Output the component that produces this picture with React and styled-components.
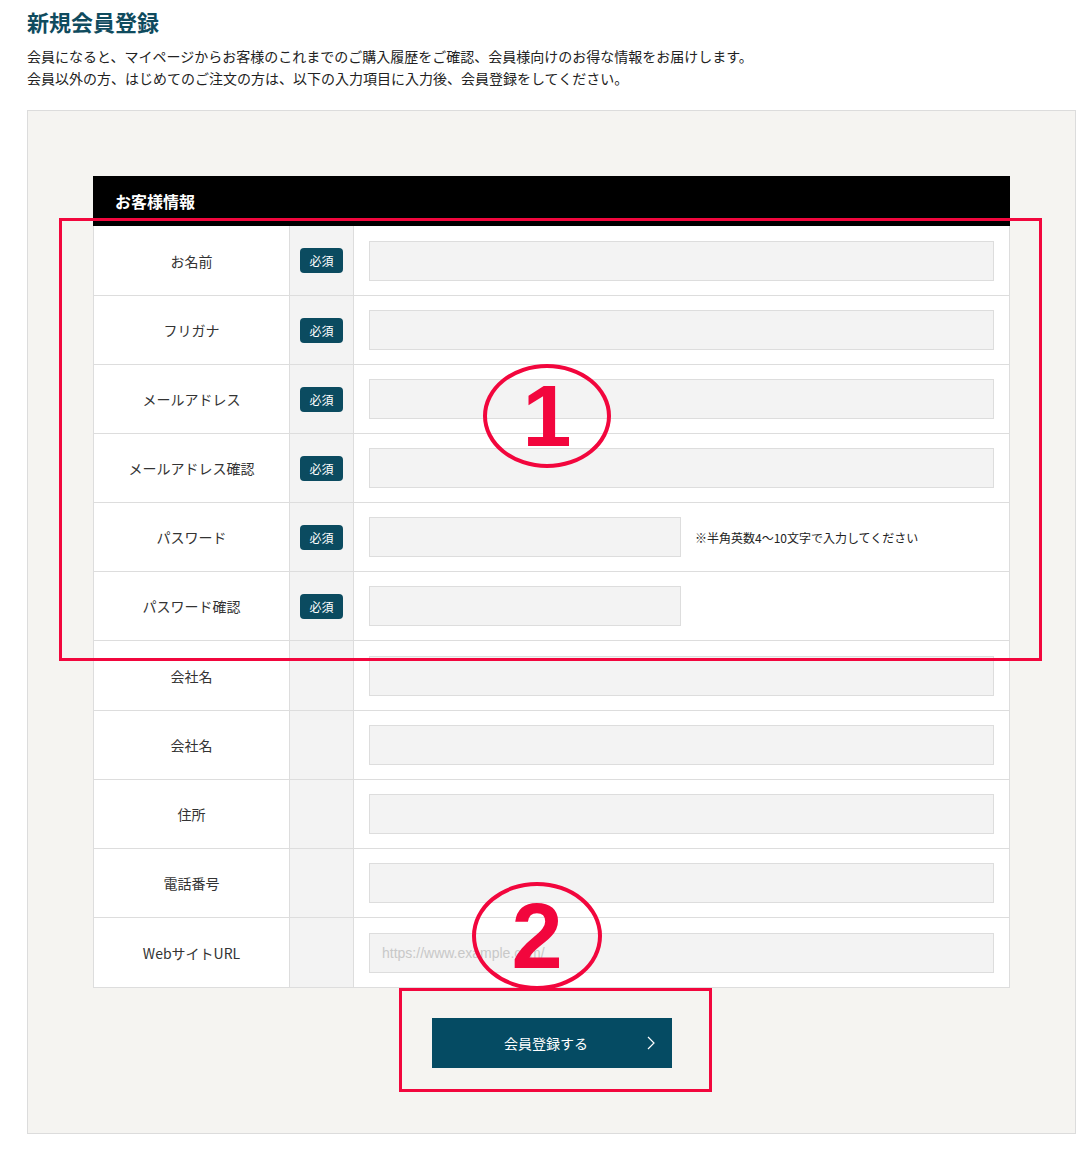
import styled, { createGlobalStyle } from "styled-components";

const GlobalStyle = createGlobalStyle`
  body {
    margin: 0;
    background: #fff;
    font-family: "Noto Sans CJK JP", "Noto Sans", sans-serif;
    color: #222;
  }
`;

const Page = styled.div`
  position: relative;
  width: 1090px;
  height: 1158px;
  padding: 0 14px 0 27px;
  box-sizing: border-box;
`;

const Title = styled.h1`
  margin: 0;
  font-size: 22px;
  line-height: 42px;
  font-weight: 700;
  color: #0f4b5e;
`;

const Intro = styled.p`
  margin: 3px 0 0;
  font-size: 14px;
  line-height: 22px;
  color: #222;
`;

const Panel = styled.section`
  margin-top: 21px;
  background: #f5f4f1;
  border: 1px solid #dcdcdc;
  padding: 65px 65px 65px;
  display: flex;
  flex-direction: column;
  align-items: center;
`;

const Table = styled.div`
  width: 917px;
  background: #fff;
  border: 1px solid #ddd;
  border-top: none;
  box-sizing: border-box;
`;

const TableHead = styled.div`
  height: 50px;
  background: #000;
  color: #fff;
  font-size: 16px;
  font-weight: 700;
  display: flex;
  align-items: center;
  padding: 0 0 0 22px;
  margin: 0 -1px;
`;

const Row = styled.div`
  display: grid;
  grid-template-columns: 195px 65px 1fr;
  height: ${(p) => (p.$tall ? "70px" : "69px")};
  border-top: ${(p) => (p.$first ? "none" : "1px solid #ddd")};
  box-sizing: border-box;
`;

const Label = styled.div`
  display: flex;
  align-items: center;
  justify-content: center;
  font-size: 14px;
  color: #333;
`;

const BadgeCell = styled.div`
  background: #f3f3f3;
  border-left: 1px solid #ddd;
  border-right: 1px solid #ddd;
  display: flex;
  align-items: center;
  justify-content: center;
`;

const Badge = styled.span`
  width: 43px;
  height: 25px;
  border-radius: 4px;
  background: #0b4b60;
  color: #fff;
  font-size: 12px;
  display: flex;
  align-items: center;
  justify-content: center;
`;

const InputCell = styled.div`
  display: flex;
  align-items: center;
  gap: 14px;
  padding: 0 15px;
`;

const Input = styled.input`
  width: ${(p) => (p.$short ? "312px" : "100%")};
  height: 40px;
  box-sizing: border-box;
  background: #f3f3f3;
  border: 1px solid #ddd;
  padding: 0 12px;
  font-family: "Liberation Sans", Arial, sans-serif;
  font-size: 14px;
  outline: none;

  &::placeholder {
    color: #c8c8c8;
  }
`;

const Note = styled.span`
  font-size: 12px;
  color: #222;
`;

const Submit = styled.button`
  margin-top: 30px;
  width: 240px;
  height: 50px;
  padding: 0 11px 0 0;
  background: #054b63;
  border: none;
  color: #fff;
  font-family: "Noto Sans CJK JP", sans-serif;
  font-size: 14px;
  display: flex;
  align-items: center;
  justify-content: center;
  position: relative;
  cursor: pointer;

  svg {
    position: absolute;
    right: 17px;
    top: 50%;
    transform: translateY(-50%);
  }
`;

const Frame = styled.div`
  position: absolute;
  border: 3px solid #f2063d;
  box-sizing: border-box;
  pointer-events: none;
`;

const Circle = styled.div`
  position: absolute;
  border: 4px solid #f2063d;
  border-radius: 50%;
  box-sizing: border-box;
  display: flex;
  align-items: center;
  justify-content: center;
  color: #f2063d;
  font-family: "Liberation Sans", Arial, sans-serif;
  font-weight: 700;
  font-size: ${(p) => p.$size}px;
  line-height: 1;
  pointer-events: none;
`;

const fields = [
  { label: "お名前", req: true },
  { label: "フリガナ", req: true },
  { label: "メールアドレス", req: true },
  { label: "メールアドレス確認", req: true },
  { label: "パスワード", req: true, short: true, note: "※半角英数4〜10文字で入力してください" },
  { label: "パスワード確認", req: true, short: true },
  { label: "会社名", tall: true },
  { label: "会社名" },
  { label: "住所" },
  { label: "電話番号" },
  { label: "WebサイトURL", placeholder: "https://www.example.com/", tall: true },
];

export default function App() {
  return (
    <>
      <GlobalStyle />
      <Page>
        <Title>新規会員登録</Title>
        <Intro>
          会員になると、マイページからお客様のこれまでのご購入履歴をご確認、会員様向けのお得な情報をお届けします。
          <br />
          会員以外の方、はじめてのご注文の方は、以下の入力項目に入力後、会員登録をしてください。
        </Intro>
        <Panel>
          <Table>
            <TableHead>お客様情報</TableHead>
            {fields.map((f, i) => (
              <Row key={i} $first={i === 0} $tall={f.tall}>
                <Label>{f.label}</Label>
                <BadgeCell>{f.req && <Badge>必須</Badge>}</BadgeCell>
                <InputCell>
                  <Input $short={f.short} placeholder={f.placeholder} />
                  {f.note && <Note>{f.note}</Note>}
                </InputCell>
              </Row>
            ))}
          </Table>
          <Submit>
            会員登録する
            <svg width="8" height="14" viewBox="0 0 8 14" fill="none">
              <path d="M1 1l6 6-6 6" stroke="#fff" strokeWidth="1.2" />
            </svg>
          </Submit>
        </Panel>

        <Frame style={{ left: 59, top: 218, width: 983, height: 443 }} />
        <Circle $size={88} style={{ left: 483, top: 364, width: 128, height: 104 }}>1</Circle>
        <Frame style={{ left: 399, top: 988, width: 313, height: 104 }} />
        <Circle $size={92} style={{ left: 472, top: 882, width: 130, height: 108 }}>2</Circle>
      </Page>
    </>
  );
}
